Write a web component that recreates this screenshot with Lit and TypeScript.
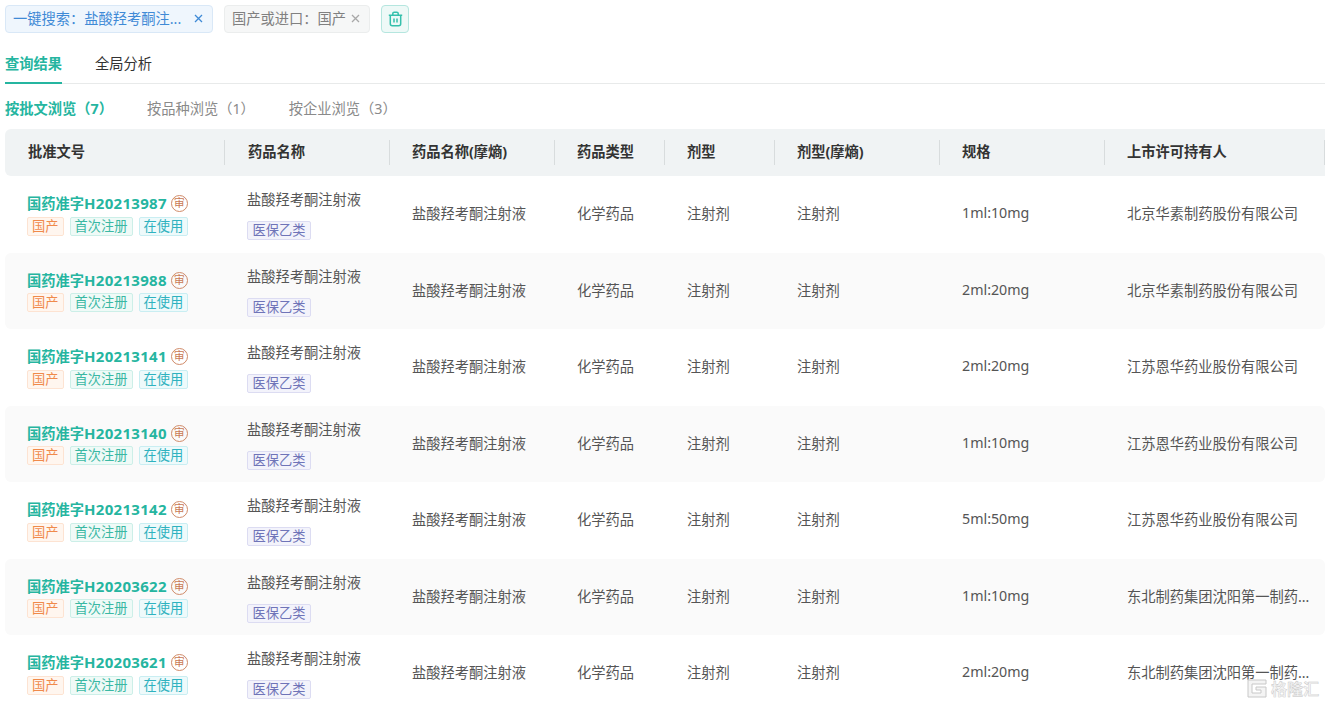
import { LitElement, html, css } from "lit";
import { customElement } from "lit/decorators.js";

const rows = [
  ["H20213987", "1ml:10mg", "北京华素制药股份有限公司"],
  ["H20213988", "2ml:20mg", "北京华素制药股份有限公司"],
  ["H20213141", "2ml:20mg", "江苏恩华药业股份有限公司"],
  ["H20213140", "1ml:10mg", "江苏恩华药业股份有限公司"],
  ["H20213142", "5ml:50mg", "江苏恩华药业股份有限公司"],
  ["H20203622", "1ml:10mg", "东北制药集团沈阳第一制药有限公司"],
  ["H20203621", "2ml:20mg", "东北制药集团沈阳第一制药有限公司"],
];
const heads = ["批准文号", "药品名称", "药品名称(摩熵)", "药品类型", "剂型", "剂型(摩熵)", "规格", "上市许可持有人"];

@customElement("app-root")
export class AppRoot extends LitElement {
  static styles = css`
    :host { display: block; width: 1325px; height: 705px; overflow: hidden; background: #fff; position: relative;
      font-family: "Noto Sans", "Noto Sans CJK SC", sans-serif; font-size: 14.25px; color: #555; }
    .chips { display: flex; align-items: center; gap: 11px; padding: 5px 0 0 5px; height: 29px; }
    .chip { height: 28px; box-sizing: border-box; border-radius: 4px; display: flex; align-items: center; border: 1px solid; font-size: 14.25px; line-height: 24px; padding-bottom: 1px; white-space: nowrap; margin-top: -1px; }
    .chip.blue { width: 208px; background: #eff6fd; border-color: #d9e8f7; color: #3f8ad6; padding-left: 7px; }
    .chip.gray { width: 146px; background: #f6f7f7; border-color: #ebeded; color: #808080; padding-left: 7px; }
    .chip .x { margin-left: auto; margin-right: 8px; display: flex; }
    .trash { width: 28px; height: 28px; box-sizing: border-box; border: 1px solid #b5e6df; background: #eef9f7; border-radius: 4px; display: flex; align-items: center; justify-content: center; margin-top: -1px; }
    .tabs { display: flex; gap: 33px; margin: 0 0 0 5px; height: 50px; border-bottom: 1px solid #e8eaea; box-sizing: border-box; }
    .tab { height: 50px; box-sizing: border-box; line-height: 59px; font-size: 14.25px; color: #333; }
    .tab.on { color: #25b5a0; font-weight: 700; border-bottom: 2px solid #25b5a0; width: 57px; }
    .sub { display: flex; gap: 34px; padding-left: 5px; height: 45px; line-height: 50px; color: #8a8a8a; font-size: 14.25px; }
    .sub .on { color: #25b5a0; font-weight: 700; }
    .table { margin-left: 5px; }
    .grid { display: grid; grid-template-columns: 220px 165px 165px 110px 110px 165px 165px 220px; }
    .head { height: 47px; background: #f0f3f4; border-radius: 6px 0 0 6px; align-items: center; color: #333; font-weight: 700; font-size: 14.25px; }
    .hc { height: 25px; line-height: 23px; padding-left: 23px; box-sizing: border-box; border-right: 1px solid #d8dcdd; }
    .hc:nth-child(n+3) { padding-left: 22px; }
    .row { height: 76.5px; align-items: center; border-radius: 6px; }
    .row.alt { background: #fafafa; }
    .c { padding-left: 22px; white-space: nowrap; overflow: hidden; text-overflow: ellipsis; box-sizing: border-box; padding-bottom: 3px; }
    .c.first { padding: 1px 0 0 22px; }
    .c.name { padding: 2px 0 0 22px; }
    .c.last { padding-right: 15px; }
    .no { display: flex; align-items: center; gap: 4px; color: #25b5a0; font-weight: 700; font-size: 14.25px; height: 20px; line-height: 20px; }
    .code { font-size: 15px; letter-spacing: 0.3px; }
    .seal { width: 15px; height: 15px; border: 1px solid #d08a68; border-radius: 50%; color: #c97a55; font-size: 11px; font-weight: 400; line-height: 14px; text-align: center; flex: none; }
    .tags { display: flex; gap: 6px; margin-top: 3px; }
    .tag { height: 19px; line-height: 17px; box-sizing: border-box; border: 1px solid; border-radius: 2px; padding: 0 4px; font-size: 13.25px; }
    .t-o { color: #f08a4b; background: #fff6ef; border-color: #fde3d2; }
    .t-g { color: #3ab8a3; background: #effaf7; border-color: #ccefe8; }
    .t-b { color: #2fb2bf; background: #eefafb; border-color: #c9eef2; }
    .t-p { color: #6f74b8; background: #f3f3fb; border-color: #dcdcf2; display: inline-block; }
    .name { line-height: 20px; }
    .name .tag { margin-top: 11px; padding: 0 4.5px; }
    .wm { position: absolute; right: 6px; bottom: 7px; display: flex; align-items: center; gap: 4px; color: #f4f4f4; font-size: 16px; line-height: 18px; font-weight: 700; -webkit-text-stroke: 0.4px #c4c4c4; }
  `;

  x(color: string) {
    return html`<svg width="11" height="11" viewBox="0 0 11 11" fill="none" stroke=${color} stroke-width="1.3"><path d="M2 2l7 7M9 2l-7 7"/></svg>`;
  }

  render() {
    return html`
      <div class="chips">
        <div class="chip blue"><span>一键搜索：盐酸羟考酮注...</span><span class="x">${this.x("#3f8ad6")}</span></div>
        <div class="chip gray"><span>国产或进口：国产</span><span class="x">${this.x("#a8a8a8")}</span></div>
        <div class="trash">
          <svg width="15" height="16" viewBox="0 0 15 16" fill="none" stroke="#35c0ac" stroke-width="1.5">
            <path d="M.8 4.2h13.4M2.3 4.2v8.6a2 2 0 0 0 2 2h6.4a2 2 0 0 0 2-2V4.2M4.8 4V2.6a1.4 1.4 0 0 1 1.4-1.4h2.6a1.4 1.4 0 0 1 1.4 1.4V4M6 7.5v4M9 7.5v4"/>
          </svg>
        </div>
      </div>
      <div class="tabs"><div class="tab on">查询结果</div><div class="tab">全局分析</div></div>
      <div class="sub"><span class="on">按批文浏览（7）</span><span>按品种浏览（1）</span><span>按企业浏览（3）</span></div>
      <div class="table">
        <div class="grid head">${heads.map((h) => html`<div class="hc">${h}</div>`)}</div>
        ${rows.map((r, i) => html`
          <div class="grid row ${i % 2 ? "alt" : ""}">
            <div class="c first">
              <div class="no"><span>国药准字<span class="code">${r[0]}</span></span><span class="seal">审</span></div>
              <div class="tags"><span class="tag t-o">国产</span><span class="tag t-g">首次注册</span><span class="tag t-b">在使用</span></div>
            </div>
            <div class="c name"><div>盐酸羟考酮注射液</div><span class="tag t-p">医保乙类</span></div>
            <div class="c">盐酸羟考酮注射液</div>
            <div class="c">化学药品</div>
            <div class="c">注射剂</div>
            <div class="c">注射剂</div>
            <div class="c">${r[1]}</div>
            <div class="c last">${r[2]}</div>
          </div>`)}
      </div>
      <div class="wm">
        <svg width="20" height="19" viewBox="0 0 20 19" fill="#f4f4f4" stroke="#c8c8c8" stroke-width="1"><path d="M1 1h18v4H5v9h9v-3h-5V8h10v10H1z"/></svg>
        <span>格隆汇</span>
      </div>
    `;
  }
}
